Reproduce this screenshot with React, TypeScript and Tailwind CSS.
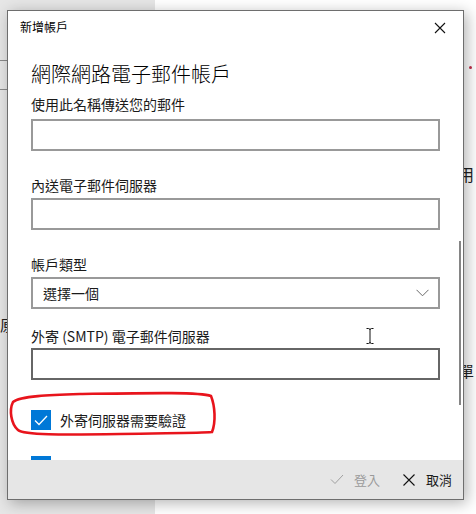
import React from 'react'

const font = { fontFamily: '"Noto Sans CJK TC", "Noto Sans", sans-serif' }

function Field({ label, mt, lmt, dark }: { label: string; mt: string; lmt: string; dark?: boolean }) {
  return (
    <>
      <div className={`${lmt} h-[20px] text-[14px] leading-[20px] text-[#1a1a1a]`}>{label}</div>
      <div
        className={`${mt} h-[32px] w-full border-2 bg-white ${dark ? 'border-[#666]' : 'border-[#999]'}`}
      />
    </>
  )
}

export default function App() {
  return (
    <div className="relative flex h-[514px] w-[476px] overflow-hidden bg-white" style={font}>
      {/* app behind the dialog */}
      <div className="flex w-[155px] flex-col bg-[#e6e6e6]">
        <div className="h-[60px]" />
        <div className="h-px bg-[#8a8a8a]" />
        <div className="h-[28px]" />
        <div className="h-px bg-[#8a8a8a]" />
      </div>
      <div className="flex-1 bg-white" />
      <span className="absolute left-0 top-[314px] text-[15px] text-[#222]">原</span>
      <span className="absolute left-[458px] top-[162px] text-[16px] text-[#222]">用</span>
      <span className="absolute left-[459px] top-[360px] text-[15px] text-[#222]">單</span>
      <span className="absolute left-[469px] top-[66px] h-[3px] w-[3px] rounded-full bg-[#c0304a]" />

      {/* dialog */}
      <div className="absolute left-[7px] top-[10px] flex h-[490px] w-[457px] flex-col border border-[#6e6e6e] bg-white shadow-[3px_3px_14px_rgba(0,0,0,0.3)]">
        <div className="flex h-[31px] shrink-0 items-center justify-between pl-[12px] pr-[17px]">
          <span className="text-[12px] leading-none text-black">新增帳戶</span>
          <svg width="12" height="12" viewBox="0 0 12 12" className="mt-[2px]">
            <path d="M1 1L11 11M11 1L1 11" stroke="#111" strokeWidth="1.1" fill="none" />
          </svg>
        </div>

        <div className="relative flex-1 overflow-hidden px-[23px]">
          <div className="mt-[18px] h-[28px] text-[20px] font-light leading-[28px] text-black">
            網際網路電子郵件帳戶
          </div>
          <Field label="使用此名稱傳送您的郵件" lmt="mt-[6px]" mt="mt-[5px]" />
          <Field label="內送電子郵件伺服器" lmt="mt-[24px]" mt="mt-[3px]" />

          <div className="mt-[24px] h-[20px] text-[14px] leading-[20px] text-[#1a1a1a]">帳戶類型</div>
          <div className="mt-[3px] flex h-[32px] w-full items-center justify-between border-2 border-[#999] bg-white pl-[10px] pr-[9px]">
            <span className="text-[14px] leading-none text-[#1a1a1a]">選擇一個</span>
            <svg width="13" height="8" viewBox="0 0 13 8">
              <path d="M0.5 0.8L6.5 6.8L12.5 0.8" stroke="#6a6a6a" strokeWidth="1" fill="none" />
            </svg>
          </div>

          <Field label="外寄 (SMTP) 電子郵件伺服器" lmt="mt-[17px]" mt="mt-[2px]" dark />

          <div className="mt-[30px] flex h-[20px] items-center gap-[9px]">
            <div className="flex h-[20px] w-[20px] items-center justify-center bg-[#0078d7]">
              <svg width="14" height="11" viewBox="0 0 14 11">
                <path d="M1 5.5L5 9.5L13 1" stroke="#fff" strokeWidth="1.3" fill="none" />
              </svg>
            </div>
            <span className="text-[14px] leading-none text-[#1a1a1a]">外寄伺服器需要驗證</span>
          </div>
          <div className="mt-[26px] flex h-[20px] items-center gap-[9px]">
            <div className="h-[20px] w-[20px] bg-[#0078d7]" />
          </div>

          {/* scrollbar */}
          <div className="absolute right-[2px] top-[199px] h-[164px] w-[2px] bg-[#858585]" />
        </div>

        <div className="flex h-[39px] shrink-0 items-center justify-end gap-[23px] bg-[#e6e6e6] pr-[11px]">
          <div className="flex items-center gap-[10px] text-[13px] leading-none text-[#9a9a9a]">
            <svg width="14" height="11" viewBox="0 0 14 11">
              <path d="M1 5.5L5 9.5L13 1" stroke="#a0a0a0" strokeWidth="1" fill="none" />
            </svg>
            <span>登入</span>
          </div>
          <div className="flex items-center gap-[11px] text-[13px] leading-none text-[#1a1a1a]">
            <svg width="12" height="12" viewBox="0 0 12 12">
              <path d="M0.5 0.5L11.5 11.5M11.5 0.5L0.5 11.5" stroke="#111" strokeWidth="1.1" fill="none" />
            </svg>
            <span>取消</span>
          </div>
        </div>
      </div>

      {/* text cursor */}
      <svg className="absolute left-[365px] top-[327px]" width="10" height="18" viewBox="0 0 10 18">
        <path d="M1.5 1.5H3.5Q5 1.5 5 3V15Q5 16.5 3.5 16.5H1.5M8.5 1.5H6.5Q5 1.5 5 3M5 15Q5 16.5 6.5 16.5H8.5" stroke="#111" strokeWidth="1" fill="none" />
      </svg>

      {/* red annotation */}
      <svg className="pointer-events-none absolute left-0 top-0" width="476" height="514" viewBox="0 0 476 514">
        <path
          d="M80 394 C50 395 20 396 13 402 C9 410 11 424 18 430 C24 435 60 435 120 434 C170 433 200 433 212 432 C216 422 215 406 211 396 C200 392 150 393 80 394"
          stroke="#e8141c"
          strokeWidth="2.6"
          fill="none"
          strokeLinecap="round"
        />
      </svg>
    </div>
  )
}
